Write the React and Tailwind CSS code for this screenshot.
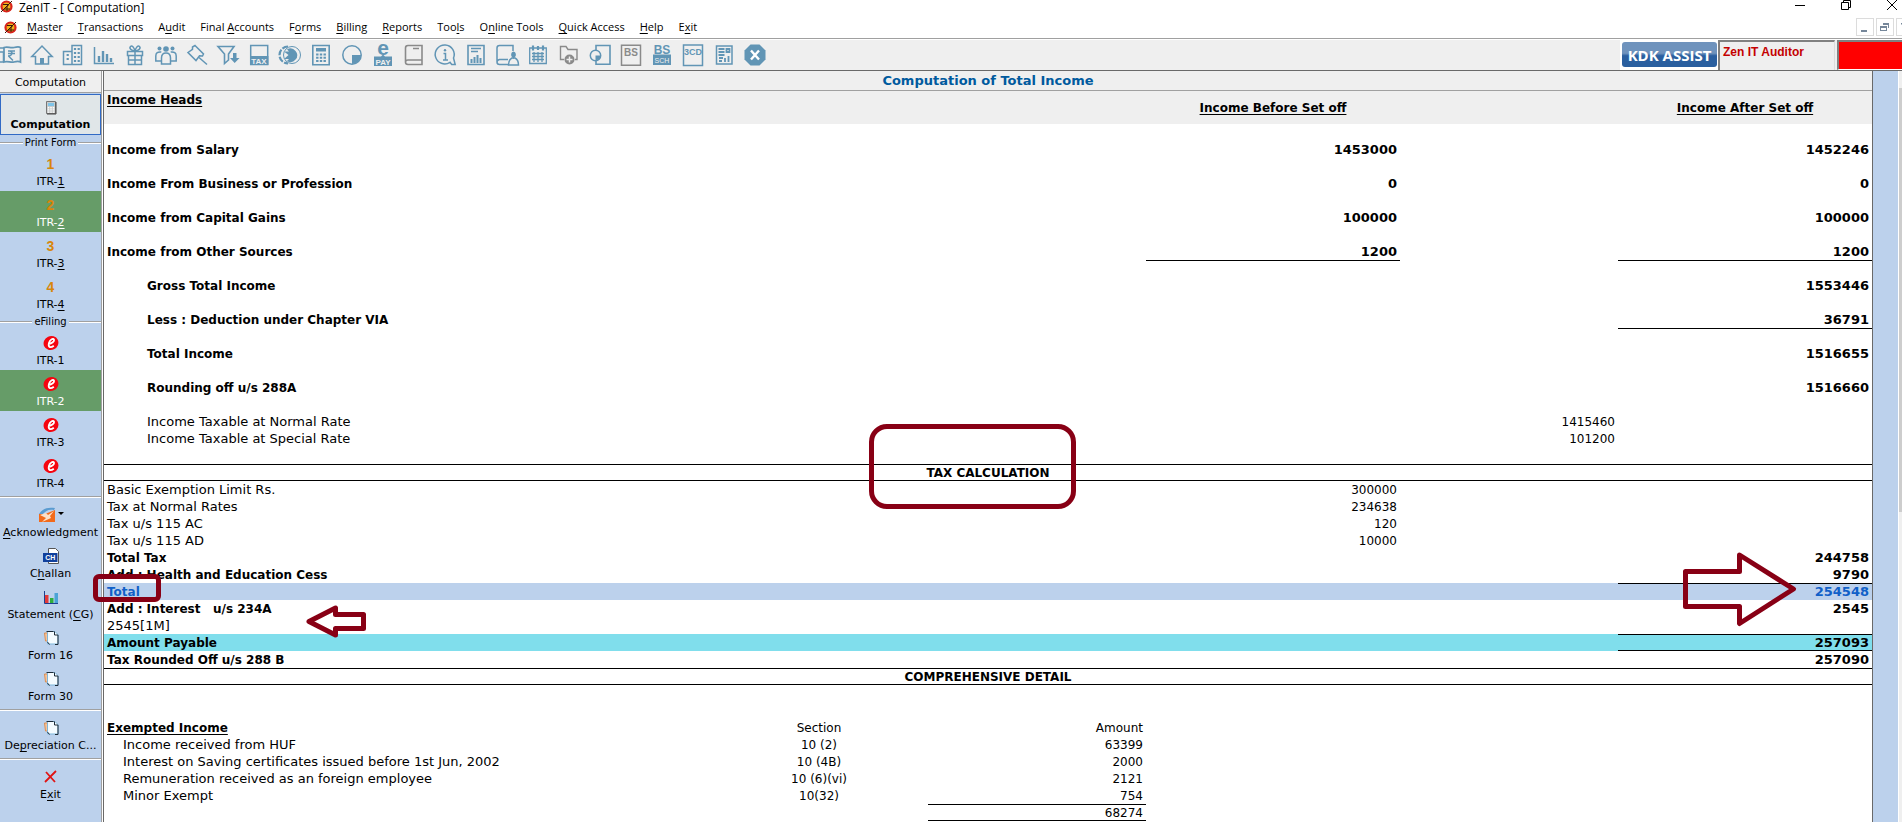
import clsx from 'clsx';

const MENU = ['_Master', '_Transactions', 'A_udit', 'Final _Accounts', 'F_orms', '_Billing', '_Reports', 'Too_ls', 'O_nline Tools', '_Quick Access', '_Help', 'E_xit'];

// "_" marks the access key that follows it
function Mnemonic({ text }) {
  const i = text.indexOf('_');
  if (i < 0) return text;
  return <>{text.slice(0, i)}<u className="decoration-1 underline-offset-2">{text[i + 1]}</u>{text.slice(i + 2)}</>;
}

function Glyph({ children, className }) {
  return (
    <svg viewBox="0 0 22 22" className={clsx('h-[22px] w-[22px] shrink-0 overflow-visible', className)} fill="none" stroke="currentColor" strokeWidth="1.5">
      {children}
    </svg>
  );
}

function GlyphText({ children, x = 11, y, size }) {
  return (
    <text x={x} y={y} fontSize={size} fontWeight="700" textAnchor="middle" fill="currentColor" stroke="none" fontFamily="Liberation Sans, sans-serif">
      {children}
    </text>
  );
}

const fill = { fill: 'currentColor', stroke: 'none' };

const TOOLS = [
  { name: 'Cash book', art: <><path d="M4 3.500c4-1.500 6 1 10 0s5-1 6.500 0V18c-2-1-3-1-6.500 0s-6-1.500-10 0z" strokeWidth="1.700" /><path d="M8 7h7M8 9.500h7M8 12c5 0 5-5 1.500-5M8.500 12l4.500 4.500" /><path d="M0 8h3.500v10H0M0 4h4" /></> },
  { name: 'Home', art: <><path d="M.8 12.500 11 2l10.200 10.500H17.500V20h-13v-7.500z" /><path d="M9 14h4v6H9z" {...fill} /></> },
  { name: 'Company', art: <><path d="M10 1.500h9.500v19H10zM1.500 7.500H10v13H1.500z" /><path d="M13 4v14M16.700 4v14" strokeWidth="2.200" strokeDasharray="2 2" /><path d="M5.700 10v8" strokeWidth="2.200" strokeDasharray="2 2" /></> },
  { name: 'Chart', art: <><path d="M1.500 3v16.500H21" strokeWidth="1.500" /><path d="M6 18v-6M10 18V7M14 18v-8M18 18v-4" strokeWidth="2.400" /></> },
  { name: 'Gift', art: <><path d="M3.500 7.500h15v4h-15zM4.500 11.500h13v9h-13zM11 7.500v13M4.500 16h13" strokeWidth="1.500" /><path d="M11 7C7 7 5 4 6.500 2.500S10 3 11 7c1-4 3-6 4.500-4.500S15 7 11 7z" strokeWidth="1.500" /></> },
  { name: 'Clients', art: <><circle cx="11" cy="5" r="2.800" {...fill} /><circle cx="4.500" cy="4.500" r="2" {...fill} /><circle cx="17.500" cy="4.500" r="2" {...fill} /><path d="M6.500 20v-6c0-4 2-5 4.500-5s4.500 1 4.500 5v6zM6 17H.8v-5c0-3 2-4.500 5.500-4M16 17h5.200v-5c0-3-2-4.500-5.500-4" /></> },
  { name: 'Pin', art: <path d="m9 1.500 8.500 8.500-1 2-3-.2-3.500 4.700L2 8.500l4.500-3.200L6.500 3zM13 13.500l8 7" /> },
  { name: 'Filter', art: <><path d="M1 2.500h16L11.500 10v6l-4 3.500V10z" strokeWidth="1.600" /><path d="M16 9h3.500v5h3L17.700 19 13 14h3z" {...fill} /></> },
  { name: 'Tax', art: <><path d="M2.700 1.500h17v19h-17z" /><path d="M2 12h18.400v9H2z" {...fill} /><text x="11" y="19.500" fontSize="8" fontWeight="700" textAnchor="middle" fill="#efefef" stroke="none" fontFamily="Liberation Sans, sans-serif">TAX</text></> },
  { name: 'Refund', art: <><circle cx="13" cy="11" r="8.500" strokeWidth="1" /><path d="M9 2.500a8.500 8.500 0 0 0 0 17" strokeWidth="2.200" strokeDasharray="6 1.500" /><path d="M8 5.500a6.700 6.700 0 1 1 0 11.500l2-2h-5L9.500 11 5 7.500h5z" {...fill} /></> },
  { name: 'Calculator', art: <><path d="M2.800 1.500h16.400v19.200H2.800z" strokeWidth="1.600" /><path d="M6 4h10v3.500H6z" {...fill} /><path d="M7.300 9.500v9M11 9.500v9M14.700 9.500v9" strokeWidth="2.400" strokeDasharray="2 1.200" /></> },
  { name: 'Period', art: <><circle cx="11" cy="11" r="9.200" strokeWidth="1.500" /><path d="M11 11h9a9 9 0 0 1-9 9z" {...fill} /></> },
  { name: 'e-Pay', art: <><GlyphText y={11} size={21}>e</GlyphText><path d="M2 12.500h7l2-2 2 2h7V22H2z" {...fill} /><text x="11" y="20.500" fontSize="8" fontWeight="700" textAnchor="middle" fill="#efefef" stroke="none" fontFamily="Liberation Sans, sans-serif">PAY</text></> },
  { name: 'Ledger', gray: true, art: <path d="M19 17.500V1.500H5Q2.500 1.500 2.500 4v14.500M19 16H5q-2.500 0-2.500 2.200t2.500 2.300h14V16M10 4.500h6" strokeWidth="1.600" /> },
  { name: 'Information', art: <><path d="M16 18.300A9.500 9.500 0 1 1 19.500 14l1.700 6.500h-3.500z" strokeWidth="1.500" /><path d="M9.500 9.500h2V16M9 16h5" strokeWidth="1.500" /><circle cx="11" cy="6.300" r="1.200" {...fill} /></> },
  { name: 'Report', art: <><path d="M3 1.500h16v19H3z" strokeWidth="1.600" /><path d="M6 4.500h10M6 7.500h7" /><path d="M6.500 19v-4M9.500 19v-6M12.500 19v-8M15.500 19v-5" strokeWidth="2" /></> },
  { name: 'Client ledger', art: <><path d="M17 7V1.500H3.500Q1 1.500 1 4v14q0 2.500 2.500 2.500H13M1 18q0-2 2.500-2.500H12" strokeWidth="1.500" /><path d="M17.500 7.500a2.700 3.200 0 0 1 1 6l-1 1.500-1-1.500a2.700 3.200 0 0 1 1-6z" {...fill} /><path d="M12.500 21c0-5 1.500-6 3.500-7h3c2 1 3.500 2 3.500 7z" /></> },
  { name: 'Calendar', art: <><path d="M2.700 4h16.600v15.500H2.700zM5 9.500h12M5 12.500h12M5 15.500h12M7 8v10M11 8v10M15 8v10" strokeWidth="1.300" /><path d="M6 1.500v5M16 1.500v5M11 2v4" strokeWidth="2.200" /></> },
  { name: 'Add folder', gray: true, art: <><path d="M6 15.500H2.500v-13H8l2 3h9v10h-2" strokeWidth="1.400" /><circle cx="11.500" cy="15.500" r="5" {...fill} /><path d="M11.500 12.500v6M8.500 15.500h6" stroke="#efefef" strokeWidth="1.500" /></> },
  { name: 'Transfer', art: <><path d="M7 7V1.500h14v18.700H7v-4" strokeWidth="1.600" /><circle cx="6.500" cy="11.500" r="5.200" strokeWidth="1.500" /><path d="M6.500 11.500h5a5 5 0 0 1-5 5z" {...fill} /></> },
  { name: 'Balance sheet', gray: true, art: <><path d="M1.500 1.300h19v20h-19z" strokeWidth="1.500" /><GlyphText y={12} size={10}>BS</GlyphText></> },
  { name: 'Balance sheet schedules', art: <><GlyphText y={10} size={12}>BS</GlyphText><path d="M2 10.500h18V21H2z" {...fill} /><text x="11" y="18.500" fontSize="7" textAnchor="middle" fill="#efefef" stroke="none" fontFamily="Liberation Sans, sans-serif">SCH</text></> },
  { name: 'Form 3CD', art: <><path d="M1.500 1h19v20.500h-19z" strokeWidth="1.500" /><GlyphText y={11} size={9}>3CD</GlyphText></> },
  { name: 'Statement', art: <><path d="M3.500 2h15.500v18H3.500z" strokeWidth="1.500" /><path d="M5.500 5h6M5.500 8h6M5.500 11h6M13.500 5h3v3h-3zM6 14h4M6 17h3M12 18v-4M15.500 18v-6" strokeWidth="1.800" /></> },
  { name: 'Close', art: <><path d="M6.500.5h9l6 6v9l-6 6h-9l-6-6v-9z" {...fill} /><path d="m7 6.500 8 9M15 6.500l-8 9" stroke="#fff" strokeWidth="2.400" /></> },
];

function Logo() {
  return (
    <svg viewBox="0 0 13 13" className="h-[13px] w-[13px] shrink-0">
      <circle cx="6.500" cy="6.500" r="5" fill="#f2b21c" stroke="#d8231b" strokeWidth="2.200" />
      <path d="M3 4.500h6L4 9h6M1 12 12 1M7 6v5" stroke="#3a1a08" fill="none" />
    </svg>
  );
}

function TitleBar() {
  return (
    <header className="flex h-4 items-start justify-between">
      <div className="flex items-start gap-1.5">
        <Logo />
        <h1 className="text-[12px] leading-4">ZenIT - [ Computation]</h1>
      </div>
      <div className="flex pr-1">
        {[
          ['Minimize', 'M1 5.500h10'],
          ['Restore', 'M1.500 2.500h7v7h-7zM3.500 2.500v-2h7v7h-2'],
          ['Close', 'm1 0 10 10M11 0 1 10'],
        ].map(([label, d]) => (
          <button key={label} aria-label={label} className="flex w-[46px] justify-end">
            <svg viewBox="0 0 12 12" className="h-3 w-3" fill="none" stroke="#000"><path d={d} /></svg>
          </button>
        ))}
      </div>
    </header>
  );
}

function MenuBar() {
  return (
    <nav className="flex h-[23px] items-center justify-between border-b border-[#a0a0a0]">
      <div className="flex items-center pl-1">
        <Logo />
        <ul className="flex gap-[15px] pl-2.5 text-[11px] leading-5 whitespace-nowrap">
          {MENU.map(m => (
            <li key={m}><button><Mnemonic text={m} /></button></li>
          ))}
        </ul>
      </div>
      <div className="-mr-3 flex gap-0.5 text-[#76879a]">
        {[
          ['Minimize document', 'M4 11h6v2H4z'],
          ['Restore document', 'M3 7h7v5H3zm1 2v2h5V9zM6 4h6v5h-1V6H6z'],
          ['Close document', 'M4 4h1l7 7v1h-1L4 5z'],
        ].map(([label, d]) => (
          <button key={label} aria-label={label} className="h-[18px] w-[18px] border border-[#dcdcdc]">
            <svg viewBox="0 0 16 16" className="h-4 w-4" fill="currentColor" fillRule="evenodd"><path d={d} /></svg>
          </button>
        ))}
      </div>
    </nav>
  );
}

function Toolbar() {
  return (
    <div className="mt-px flex h-[31px] items-stretch justify-between border-b border-[#696969] bg-[#efefef]">
      <div className="-ml-[5px] flex items-center">
        {TOOLS.map(t => (
          <button key={t.name} aria-label={t.name} className={clsx('flex w-[31px] justify-center', t.gray ? 'text-[#8a8a8a]' : 'text-[#6195b5]')}>
            <Glyph>{t.art}</Glyph>
          </button>
        ))}
      </div>
      <div className="flex">
        <div className="bg-white pt-0.5 pr-px pl-0.5">
          <button className="h-[25px] w-[95px] rounded-[3px] bg-linear-to-b from-[#6f93bd] from-45% to-[#2a5f9f] to-55% text-[15px] leading-6 font-bold whitespace-nowrap text-white">KDK ASSIST</button>
        </div>
        <div className="w-[117px] border-2 border-r border-b-0 border-[#808080] border-r-[#dcdcdc] pt-0.5 pl-[3px] font-['Liberation_Sans',Arial,sans-serif] text-[12px] leading-4 font-bold text-[#c40000]">Zen IT Auditor</div>
        <div className="ml-0.5 w-[65px] border-t-2 border-b border-l-2 border-[#808080] border-b-white bg-[#ff0000]" />
      </div>
    </div>
  );
}

function NumberIcon({ n }) {
  return <span className="font-['Liberation_Sans',Arial,sans-serif] text-[14px] leading-4 font-bold text-[#d8860b]">{n}</span>;
}

function EIcon() {
  return (
    <svg viewBox="0 0 16 16" className="h-4 w-4">
      <ellipse cx="8" cy="8" rx="7.500" ry="7" fill="#f5050f" transform="rotate(-25 8 8)" />
      <path d="M5.500 9C9 8.500 11.500 6.500 11 4.800S7 4 6 8s1 5.500 4.800 2.700" fill="none" stroke="#fff" strokeWidth="1.900" />
    </svg>
  );
}

function PageIcon() {
  return (
    <svg viewBox="0 0 16 16" className="h-4 w-4">
      <path d="M1.500 3h3v8h-2z" fill="#f6c59c" stroke="#d9803a" strokeWidth=".8" />
      <path d="M4.500 1.500h7.500l3 3v9.500H4.500z" fill="#f4fbff" stroke="#7fb6da" />
      <path d="M11.500 1.500v3.500h3.500v9.500h-3M3.500 1.500h7M4.500 12l2 2.500" fill="none" stroke="#1c2b38" />
    </svg>
  );
}

function CalculatorIcon() {
  return (
    <svg viewBox="0 0 16 16" className="h-4 w-4">
      <path d="M3.500 2.500h9v12h-9z" fill="#c9cccc" stroke="#777" />
      <path d="M5 4h6v3H5z" fill="#7fc4e8" />
      <path d="M5.500 8v6M8 8v6M10.500 8v6" stroke="#fff" strokeWidth="1.500" strokeDasharray="1.400 .8" />
      <path d="M13 3v12H4" stroke="#444" fill="none" />
    </svg>
  );
}

function AckIcon() {
  return (
    <svg viewBox="0 0 26 16" className="h-4 w-[26px]">
      <path d="M1 7c4-6 9-7 16-6l-1 2C10 2 8 4 5 7z" fill="#5a9bd0" />
      <path d="M1 7h6l10-4v12H1z" fill="#f26a1b" />
      <path d="m2 8 6-2 2 2 6-4-4 5 1 2-9 4 4-4z" fill="#fbe0c8" />
      <path d="M20 5h6l-3 3z" fill="#000" />
    </svg>
  );
}

function ChallanIcon() {
  return (
    <svg viewBox="0 0 16 16" className="h-4 w-4">
      <path d="M5.500.5h7l3 3v12h-10z" fill="#fff" stroke="#555" />
      <path d="M0 5h14.500v9H0z" fill="#10409c" />
      <text x="7.300" y="12" fontSize="7" fontWeight="700" textAnchor="middle" fill="#fff" fontFamily="Liberation Sans, sans-serif">CH</text>
    </svg>
  );
}

function GraphIcon() {
  return (
    <svg viewBox="0 0 16 16" className="h-4 w-4">
      <path d="M2 6h3.500v8.500H2z" fill="#e23a3a" />
      <path d="M7 9h3.500v5.500H7z" fill="#2fae3b" />
      <path d="M11.500 4H15v10.500h-3.500z" fill="#4ba3d6" />
      <path d="M1.500 2v12.500H15" fill="none" stroke="#1d3f8f" />
    </svg>
  );
}

function CrossIcon() {
  return (
    <svg viewBox="0 0 16 16" className="h-4 w-4">
      <path d="m3 3 9 10M13 2 2 13" fill="none" stroke="#e01414" strokeWidth="1.800" />
    </svg>
  );
}

function SideItem({ icon, label, active, selected }) {
  return (
    <button
      className={clsx(
        'flex h-[41px] w-full flex-col items-center overflow-hidden text-[11px] leading-[17px] whitespace-nowrap',
        selected ? 'border border-[#316ac5] bg-[#e0e6e8] pt-1 font-bold' : 'pt-1.5',
        active && 'bg-[#669c68] text-white',
      )}
    >
      <span className="flex h-[17px] shrink-0 items-start">{icon}</span>
      <span><Mnemonic text={label} /></span>
    </button>
  );
}

function SideGroup({ children }) {
  return (
    <div className="flex h-[15px] items-center gap-0.5 text-[10px] leading-[15px]">
      <span className="h-0.5 flex-1 border-t border-[#a0a0a0] bg-white" />
      {children}
      <span className="h-0.5 flex-1 border-t border-[#a0a0a0] bg-white" />
    </div>
  );
}

function SideRule() {
  return <div className="flex h-2 items-center"><span className="h-0.5 w-full border-t border-[#a0a0a0] bg-white" /></div>;
}

function Sidebar() {
  return (
    <aside className="w-[102px] shrink-0 border-r border-[#a0a0a0] bg-[#bcd1ec] font-['DejaVu_Sans',Verdana,sans-serif]">
      <h2 className="mb-px h-[22px] border-b border-[#a0a0a0] bg-[#efefef] pt-0.5 text-center text-[11px] leading-5">Computation</h2>
      <SideItem selected icon={<CalculatorIcon />} label="Computation" />
      <SideGroup>Print Form</SideGroup>
      <SideItem icon={<NumberIcon n={1} />} label="ITR-_1" />
      <SideItem icon={<NumberIcon n={2} />} label="ITR-_2" active />
      <SideItem icon={<NumberIcon n={3} />} label="ITR-_3" />
      <SideItem icon={<NumberIcon n={4} />} label="ITR-_4" />
      <SideGroup>eFiling</SideGroup>
      <SideItem icon={<EIcon />} label="ITR-1" />
      <SideItem icon={<EIcon />} label="ITR-2" active />
      <SideItem icon={<EIcon />} label="ITR-3" />
      <SideItem icon={<EIcon />} label="ITR-4" />
      <SideRule />
      <SideItem icon={<AckIcon />} label="_Acknowledgment" />
      <SideItem icon={<ChallanIcon />} label="C_hallan" />
      <SideItem icon={<GraphIcon />} label="Statement (_CG)" />
      <SideItem icon={<PageIcon />} label="Form 16" />
      <SideItem icon={<PageIcon />} label="Form 30" />
      <SideRule />
      <SideItem icon={<PageIcon />} label="De_preciation C..." />
      <SideRule />
      <SideItem icon={<CrossIcon />} label="E_xit" />
    </aside>
  );
}

const GAP = {};

const ROWS = [
  GAP,
  { label: 'Income from Salary', before: '1453000', after: '1452246', bold: true },
  GAP,
  { label: 'Income From Business or Profession', before: '0', after: '0', bold: true },
  GAP,
  { label: 'Income from Capital Gains', before: '100000', after: '100000', bold: true },
  GAP,
  { label: 'Income from Other Sources', before: '1200', after: '1200', bold: true },
  { rule: ['before', 'after'] },
  { label: 'Gross Total Income', after: '1553446', bold: true, indent: true },
  GAP,
  { label: 'Less : Deduction under Chapter VIA', after: '36791', bold: true, indent: true },
  { rule: ['after'] },
  { label: 'Total Income', after: '1516655', bold: true, indent: true },
  GAP,
  { label: 'Rounding off u/s 288A', after: '1516660', bold: true, indent: true },
  GAP,
  { label: 'Income Taxable at Normal Rate', inner: '1415460', indent: true },
  { label: 'Income Taxable at Special Rate', inner: '101200', indent: true },
  GAP,
  { heading: 'TAX CALCULATION' },
  { label: 'Basic Exemption Limit Rs.', before: '300000' },
  { label: 'Tax at Normal Rates', before: '234638' },
  { label: 'Tax u/s 115 AC', before: '120' },
  { label: 'Tax u/s 115 AD', before: '10000' },
  { label: 'Total Tax', after: '244758', bold: true },
  { label: 'Add : Health and Education Cess', after: '9790', bold: true },
  { label: 'Total', after: '254548', bold: true, rule: ['after'], tone: 'bg-[#bcd1ec] text-[#1060c8]' },
  { label: 'Add : Interest   u/s 234A', after: '2545', bold: true },
  { label: '2545[1M]' },
  { label: 'Amount Payable', after: '257093', bold: true, rule: ['after'], ruleBelow: true, tone: 'bg-[#80deec]' },
  { label: 'Tax Rounded Off u/s 288 B', after: '257090', bold: true },
  { heading: 'COMPREHENSIVE DETAIL' },
  GAP,
  GAP,
];

const EXEMPTED = [
  ['Income received from HUF', '10 (2)', '63399'],
  ['Interest on Saving certificates issued before 1st Jun, 2002', '10 (4B)', '2000'],
  ['Remuneration received as an foreign employee', '10 (6)(vi)', '2121'],
  ['Minor Exempt', '10(32)', '754'],
];

function AmountCell({ value, rule, ruleBelow, bold }) {
  return (
    <td className="p-0">
      <div
        className={clsx(
          'h-[17px] border-t pr-[3px] text-right leading-4',
          bold ? 'text-[13px]' : 'text-[12px]',
          rule ? 'border-t-black' : 'border-t-transparent',
          ruleBelow && 'border-b border-b-black',
        )}
      >
        {value}
      </div>
    </td>
  );
}

function Row({ row }) {
  if (row.heading) {
    return (
      <tr className="h-[17px]">
        <th colSpan={4} className="p-0"><div className="h-[17px] border-y border-black text-[12px] leading-4">{row.heading}</div></th>
      </tr>
    );
  }
  return (
    <tr className={clsx('h-[17px]', row.tone, row.bold ? 'font-bold' : 'font-normal')}>
      <td
        className={clsx(
          'overflow-hidden p-0 whitespace-pre',
          row.indent ? 'pl-[43px]' : 'pl-[3px]',
          row.bold ? 'pt-px text-[12px] leading-4' : 'text-[13px]',
        )}
      >
        {row.label}
      </td>
      <AmountCell value={row.before} rule={row.rule?.includes('before')} bold={row.bold} />
      <AmountCell value={row.inner} />
      <AmountCell value={row.after} rule={row.rule?.includes('after')} ruleBelow={row.ruleBelow} bold={row.bold} />
    </tr>
  );
}

function Annotations() {
  return (
    <div className="pointer-events-none">
      <div className="absolute top-[353px] left-1/2 -ml-[119px] h-[85px] w-[207px] rounded-[18px] border-[5px] border-[#880015]" />
      <div className="absolute top-[503px] -left-[11px] h-7 w-[68px] rounded-md border-[5px] border-[#880015]" />
      <svg viewBox="0 0 64 34" className="absolute top-[533px] left-[201px] h-[34px] w-16" fill="none" stroke="#880015" strokeWidth="5" strokeLinejoin="round">
        <path d="M4 17.500 30.500 4v6.500h28v14h-28V31z" />
      </svg>
      <svg viewBox="0 0 116 76" className="absolute top-[481px] right-[75px] h-[76px] w-[116px]" fill="none" stroke="#880015" strokeWidth="5" strokeLinejoin="round">
        <path d="M4.500 19.500h54V3l54 34-54 34.500V54.500h-54z" />
      </svg>
    </div>
  );
}

function Computation() {
  return (
    <main className="relative ml-px min-w-0 flex-1 self-stretch border-x border-[#696969] bg-white font-['DejaVu_Sans',Verdana,sans-serif] text-[13px] leading-[17px]">
      <h2 className="h-5 border-b border-[#a0a0a0] bg-[#efefef] text-center leading-[19px] font-bold text-[#005a9e]">Computation of Total Income</h2>
      <table className="w-full table-fixed border-collapse">
        <colgroup>
          <col />
          <col className="w-[254px]" />
          <col className="w-[218px]" />
          <col className="w-[254px]" />
        </colgroup>
        <thead className="bg-[#efefef]">
          <tr className="h-[33px] text-[12px] underline decoration-1 underline-offset-2">
            <th className="p-0 pt-px pl-[3px] text-left align-top">Income Heads</th>
            <th className="p-0 pt-px">Income Before Set off</th>
            <th className="p-0" />
            <th className="p-0 pt-px">Income After Set off</th>
          </tr>
        </thead>
        <tbody>
          {ROWS.map((row, i) => <Row key={i} row={row} />)}
        </tbody>
      </table>
      <div className="pr-[726px]">
        <table className="w-full table-fixed border-collapse whitespace-nowrap">
          <colgroup>
            <col />
            <col className="w-[218px]" />
            <col className="w-[218px]" />
          </colgroup>
          <thead>
            <tr className="h-[17px] text-[12px] leading-4">
              <th className="p-0 pt-px pl-[3px] text-left underline decoration-1 underline-offset-2">Exempted Income</th>
              <th className="p-0 pt-px font-normal">Section</th>
              <th className="p-0 pt-px pr-[3px] text-right font-normal">Amount</th>
            </tr>
          </thead>
          <tbody>
            {EXEMPTED.map(([name, section, amount]) => (
              <tr key={name} className="h-[17px]">
                <td className="p-0 pl-[19px]">{name}</td>
                <td className="p-0 pt-px text-center text-[12px] leading-4">{section}</td>
                <td className="p-0 pt-px pr-[3px] text-right text-[12px] leading-4">{amount}</td>
              </tr>
            ))}
          </tbody>
          <tfoot>
            <tr className="h-[17px]">
              <td colSpan={2} className="p-0" />
              <td className="p-0"><div className="h-[17px] border-y border-black pr-[3px] text-right text-[12px] leading-4">68274</div></td>
            </tr>
          </tfoot>
        </table>
      </div>
      <Annotations />
    </main>
  );
}

export default function App() {
  return (
    <div className="flex h-screen flex-col overflow-hidden bg-white font-['Open_Sans','Segoe_UI',sans-serif] text-black">
      <TitleBar />
      <MenuBar />
      <Toolbar />
      <div className="flex min-h-0 flex-1">
        <Sidebar />
        <Computation />
        <div className="w-[25px] shrink-0 bg-[#bcd1ec]" />
        <div className="ml-px w-[3px] shrink-0 bg-[#efefef] pt-[17px]">
          <div className="h-[424px] bg-[#cdcdcd]" />
        </div>
      </div>
    </div>
  );
}
